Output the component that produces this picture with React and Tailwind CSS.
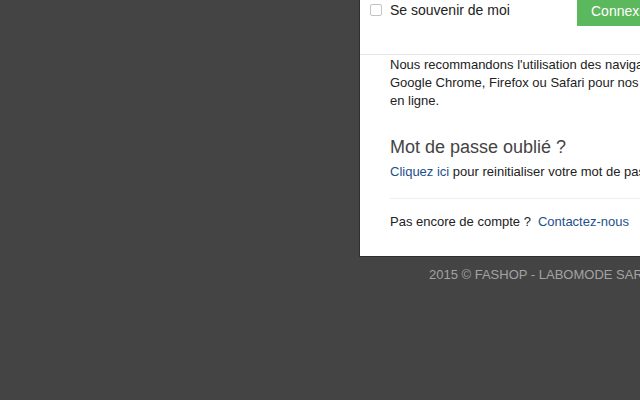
export default function App() {
  return (
    <div
      className="w-[640px] h-[400px] bg-[#444444] overflow-hidden flex flex-col"
      style={{ fontFamily: '"Liberation Sans", Arial, Helvetica, sans-serif' }}
    >
      <div className="ml-[359px] w-[420px] shrink-0 bg-white border-l border-b border-[#2f2f2f] flex flex-col">
        <div className="h-[26px] flex items-start">
          <div className="w-[217px] flex items-start pl-[10px]">
            <span className="mt-[4px] w-[12px] h-[12px] rounded-[2px] border border-[#c4c4c4] bg-white shrink-0" />
            <span className="ml-[8px] mt-[1px] text-[14px] leading-[18px] text-[#222]">Se souvenir de moi</span>
          </div>
          <div className="h-[26px] bg-[#5cb85c] text-white text-[14px] leading-[22px] pl-[14px] pr-[14px]">
            Connexion
          </div>
        </div>
        <div className="h-[28px]" />
        <div className="h-px bg-[#e6e6e6]" />
        <div className="px-[30px] pt-[1px] pb-[25px]">
          <p className="text-[13px] leading-[18px] text-[#222] whitespace-nowrap">
            Nous recommandons l'utilisation des navigateurs internet
            <br />
            Google Chrome, Firefox ou Safari pour nos services
            <br />
            en ligne.
          </p>
          <h2 className="mt-[26px] text-[18px] leading-[22px] font-light text-[#444]">Mot de passe oublié ?</h2>
          <p className="mt-[5px] text-[13px] leading-[18px] text-[#222] whitespace-nowrap">
            <span className="text-[#1d4f8b]">Cliquez ici</span> pour reinitialiser votre mot de passe
          </p>
          <div className="mt-[17px] h-px bg-[#efefef]" />
          <p className="mt-[14px] text-[13px] leading-[18px] text-[#222] whitespace-nowrap">
            Pas encore de compte ?<span className="ml-[7px] text-[#1d4f8b]">Contactez-nous</span>
          </p>
        </div>
      </div>
      <div className="mt-[9px] pl-[429px] text-[13px] leading-[18px] text-[#a3a3a3] whitespace-nowrap">
        2015 © FASHOP - LABOMODE SARL
      </div>
    </div>
  );
}
